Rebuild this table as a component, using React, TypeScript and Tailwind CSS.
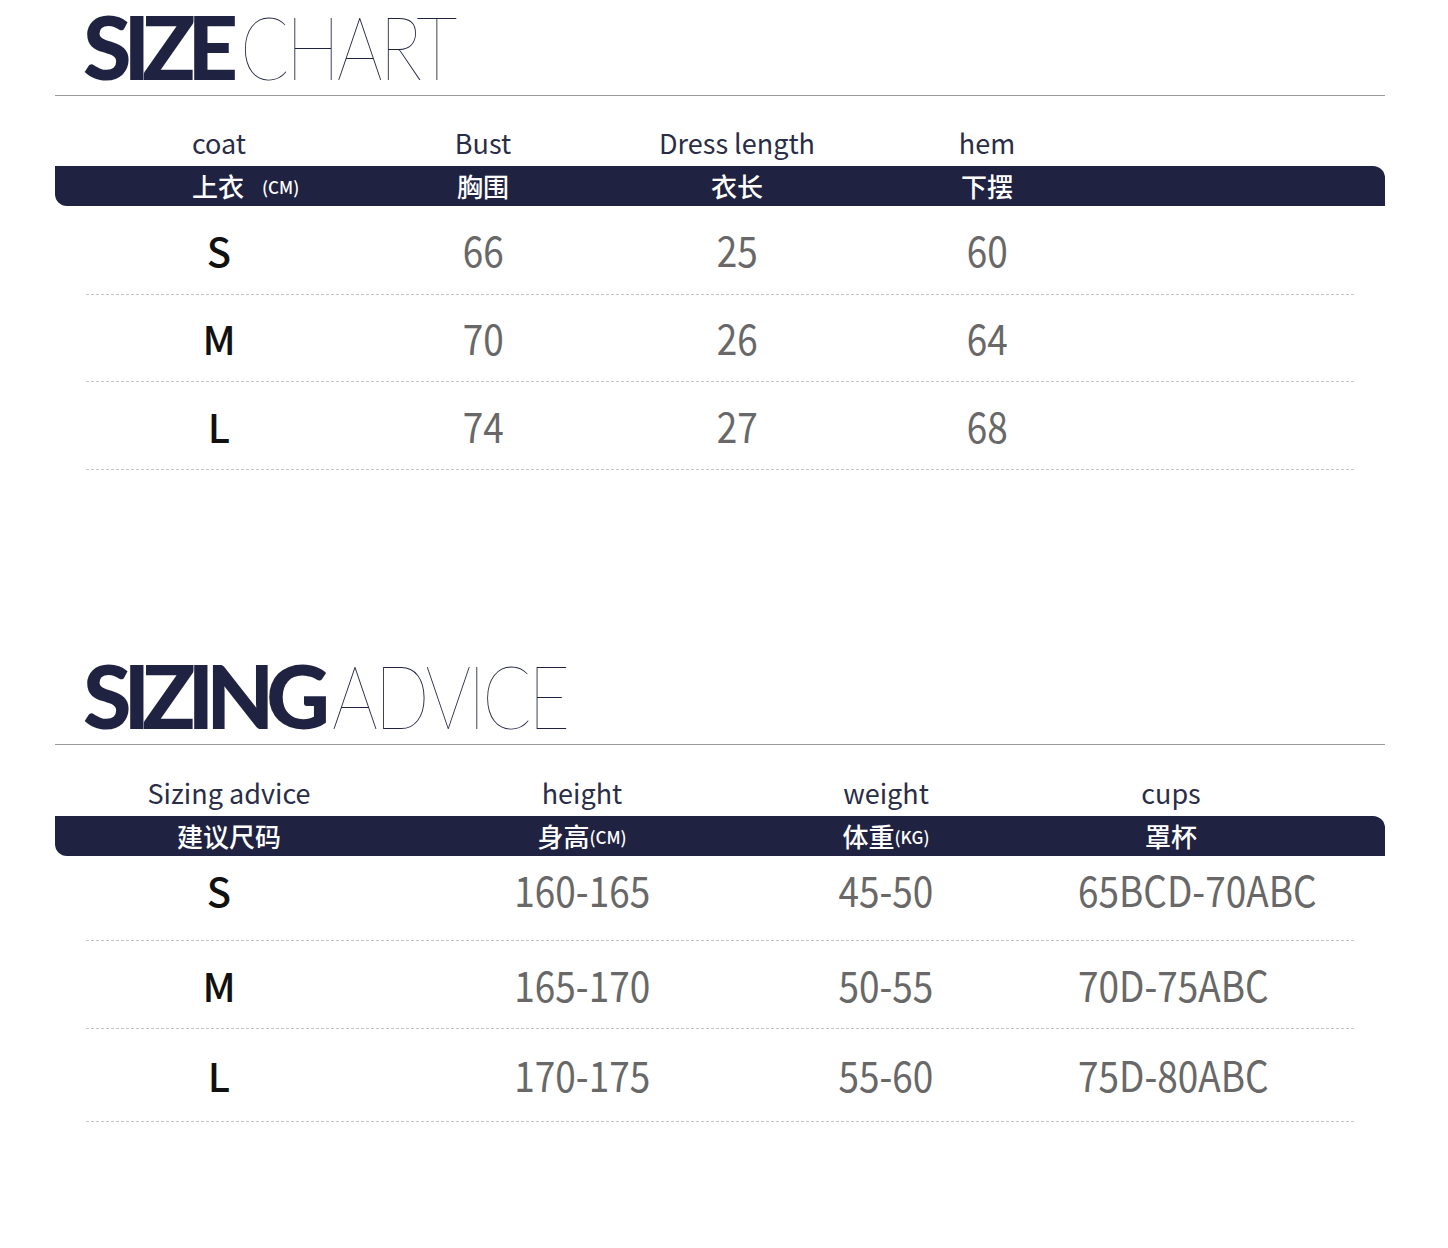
import React from "react";

const NAVY = "bg-[#1f2240]";

const chartRows = [
  { size: "S", bust: "66", length: "25", hem: "60", h: "h-[88px]" },
  { size: "M", bust: "70", length: "26", hem: "64", h: "h-[86px]" },
  { size: "L", bust: "74", length: "27", hem: "68", h: "h-[87px]" },
];

const adviceRows = [
  { size: "S", height: "160-165", weight: "45-50", cups: "65BCD-70ABC", h: "h-[84px] pb-[16px]" },
  { size: "M", height: "165-170", weight: "50-55", cups: "70D-75ABC", h: "h-[87px]" },
  { size: "L", height: "170-175", weight: "55-60", cups: "75D-80ABC", h: "h-[92px]" },
];

function Title({ bold, light }: { bold: string; light: string }) {
  return (
    <div className="h-[95px] flex items-end pl-[28px] pb-[5px] text-[#1f2240] font-['Lato',sans-serif] leading-none whitespace-nowrap">
      <span className="text-[88px] font-black tracking-[-8px]">{bold}</span>
      <span className="inline-block origin-left scale-x-[0.82] text-[88px] font-extralight tracking-[-4px] ml-[10px]">{light}</span>
    </div>
  );
}

function Dashed() {
  return <div className="mx-[31px] border-b border-dashed border-[#c4c4c4]" />;
}

function Value({ children }: { children: React.ReactNode }) {
  return (
    <span className="inline-block scale-x-[0.88] whitespace-nowrap text-[42px] leading-none text-[#686868]">{children}</span>
  );
}

function SizeChart() {
  const cols = "grid grid-cols-[328px_200px_308px_192px_1fr]";
  return (
    <section>
      <Title bold="SIZE" light="CHART" />
      <div className="h-px bg-[#9a9a9a]" />
      <div className={`${cols} h-[70px] items-end pb-[10px] text-[27px] leading-none text-[#2a2d47]`}>
        <div className="text-center">coat</div>
        <div className="text-center">Bust</div>
        <div className="text-center">Dress length</div>
        <div className="text-center">hem</div>
        <div />
      </div>
      <div className={`${cols} ${NAVY} h-[40px] items-center rounded-tr-[12px] rounded-bl-[12px] text-white text-[26px] font-medium leading-none`}>
        <div className="flex items-center pl-[137px]">
          <span>上衣</span>
          <span className="ml-[18px] text-[17px]">(CM)</span>
        </div>
        <div className="text-center">胸围</div>
        <div className="text-center">衣长</div>
        <div className="text-center">下摆</div>
        <div />
      </div>
      {chartRows.map((r) => (
        <React.Fragment key={r.size}>
          <div className={`${cols} ${r.h} items-center`}>
            <div className="text-center text-[40px] font-medium leading-none text-[#111111]">{r.size}</div>
            <div className="text-center"><Value>{r.bust}</Value></div>
            <div className="text-center"><Value>{r.length}</Value></div>
            <div className="text-center"><Value>{r.hem}</Value></div>
            <div />
          </div>
          <Dashed />
        </React.Fragment>
      ))}
    </section>
  );
}

function SizingAdvice() {
  const cols = "grid grid-cols-[348px_358px_250px_320px_1fr]";
  return (
    <section className="mt-[179px]">
      <Title bold="SIZING" light="ADVICE" />
      <div className="h-px bg-[#9a9a9a]" />
      <div className={`${cols} h-[71px] items-end pb-[10px] text-[27px] leading-none text-[#2a2d47]`}>
        <div className="text-center">Sizing advice</div>
        <div className="text-center">height</div>
        <div className="text-center">weight</div>
        <div className="text-center">cups</div>
        <div />
      </div>
      <div className={`${cols} ${NAVY} h-[40px] items-center rounded-tr-[12px] rounded-bl-[12px] text-white text-[26px] font-medium leading-none`}>
        <div className="text-center">建议尺码</div>
        <div className="flex items-center justify-center">
          <span>身高</span>
          <span className="text-[17px]">(CM)</span>
        </div>
        <div className="flex items-center justify-center">
          <span>体重</span>
          <span className="text-[17px]">(KG)</span>
        </div>
        <div className="text-center">罩杯</div>
        <div />
      </div>
      {adviceRows.map((r) => (
        <React.Fragment key={r.size}>
          <div className={`${cols} ${r.h} items-center`}>
            <div className="pr-[20px] text-center text-[40px] font-medium leading-none text-[#111111]">{r.size}</div>
            <div className="text-center"><Value>{r.height}</Value></div>
            <div className="text-center"><Value>{r.weight}</Value></div>
            <div className="pl-[67px] whitespace-nowrap">
              <span className="inline-block origin-left scale-x-[0.88] text-[42px] leading-none text-[#686868]">{r.cups}</span>
            </div>
            <div />
          </div>
          <Dashed />
        </React.Fragment>
      ))}
    </section>
  );
}

export default function App() {
  return (
    <div className="w-[1448px] h-[1248px] bg-white font-['Noto_Sans_CJK_SC','Noto_Sans',sans-serif]">
      <div className="ml-[55px] w-[1330px]">
        <SizeChart />
        <SizingAdvice />
      </div>
    </div>
  );
}
